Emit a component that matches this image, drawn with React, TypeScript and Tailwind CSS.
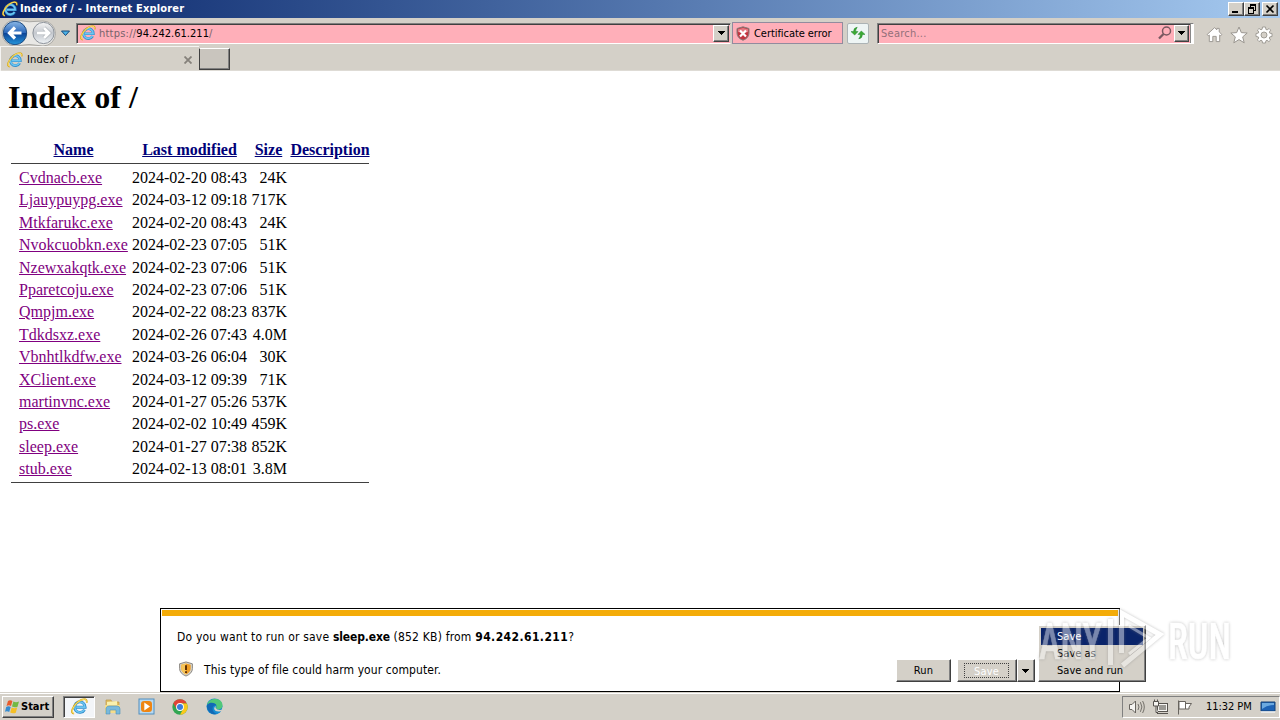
import type { ReactNode } from 'react';

interface FileEntry {
  name: string;
  modified: string;
  size: string;
}

const FILES: FileEntry[] = [
  { name: 'Cvdnacb.exe', modified: '2024-02-20 08:43', size: '24K' },
  { name: 'Ljauypuypg.exe', modified: '2024-03-12 09:18', size: '717K' },
  { name: 'Mtkfarukc.exe', modified: '2024-02-20 08:43', size: '24K' },
  { name: 'Nvokcuobkn.exe', modified: '2024-02-23 07:05', size: '51K' },
  { name: 'Nzewxakqtk.exe', modified: '2024-02-23 07:06', size: '51K' },
  { name: 'Pparetcoju.exe', modified: '2024-02-23 07:06', size: '51K' },
  { name: 'Qmpjm.exe', modified: '2024-02-22 08:23', size: '837K' },
  { name: 'Tdkdsxz.exe', modified: '2024-02-26 07:43', size: '4.0M' },
  { name: 'Vbnhtlkdfw.exe', modified: '2024-03-26 06:04', size: '30K' },
  { name: 'XClient.exe', modified: '2024-03-12 09:39', size: '71K' },
  { name: 'martinvnc.exe', modified: '2024-01-27 05:26', size: '537K' },
  { name: 'ps.exe', modified: '2024-02-02 10:49', size: '459K' },
  { name: 'sleep.exe', modified: '2024-01-27 07:38', size: '852K' },
  { name: 'stub.exe', modified: '2024-02-13 08:01', size: '3.8M' },
];

// Classic raised 3D edge
const RAISED =
  'bg-[#d4d0c8] border border-t-white border-l-white border-r-[#404040] border-b-[#404040] shadow-[inset_-1px_-1px_0_#808080]';

function IeLogo({ className }: { className: string }) {
  return (
    <svg className={className} viewBox="0 0 18 18" fill="none">
      <path d="M14.3 12.4A5.6 5.6 0 1 1 15 9.8H5.5" stroke="#2f8bcb" strokeWidth="3" />
      <path d="M14.1 12.3A5.4 5.4 0 1 1 14.8 9.7H5.6" stroke="#6cc6f2" strokeWidth="1.7" />
      <path d="M3.3 16.6C-1.4 16.6 1.6 8.6 7.2 4.1C12 .3 17.6 -.4 16.6 5" stroke="#d9a920" strokeWidth="1.8" />
      <path d="M3.1 16.2C-.6 15.8 2.3 8.5 7.5 4.2C12 .8 16.8 .2 16.3 4" stroke="#fae36b" strokeWidth="1" />
    </svg>
  );
}

function DownArrow() {
  return (
    <svg className="h-[4px] w-[7px]" viewBox="0 0 7 4" shapeRendering="crispEdges">
      <path d="M0 0H7V1H6V2H5V3H4V4H3V3H2V2H1V1H0Z" fill="#000" />
    </svg>
  );
}

function WindowButton({ children }: { children: ReactNode }) {
  return (
    <div className={`h-[14px] w-4 ${RAISED}`}>
      <svg className="h-3 w-[14px]" viewBox="0 0 14 12" fill="none" stroke="#000" shapeRendering="crispEdges">
        {children}
      </svg>
    </div>
  );
}

function TitleBar() {
  return (
    <div className="flex h-[18px] items-center bg-linear-to-r from-[#0a246a] to-[#a6caf0] pr-[2px] pl-[2px]">
      <IeLogo className="h-4 w-4" />
      <span className="ml-[2px] pt-px text-[11px] font-bold tracking-[0.16px] whitespace-nowrap text-white">
        Index of / - Internet Explorer
      </span>
      <div className="ml-auto flex">
        <WindowButton>
          <path d="M3 9H9" strokeWidth="2" />
        </WindowButton>
        <WindowButton>
          <path d="M5 2H11" strokeWidth="2" />
          <path d="M5.5 2V4M10.5 2V7.5H9M3.5 5V10.5H8.5V5" />
          <path d="M3 5H9" strokeWidth="2" />
        </WindowButton>
        <div className="w-[2px]" />
        <WindowButton>
          <path d="M3.5 2.5L10.5 9.5M10.5 2.5L3.5 9.5" strokeWidth="1.7" shapeRendering="auto" />
        </WindowButton>
      </div>
    </div>
  );
}

function NavButtons() {
  return (
    <svg className="h-7 w-[74px] shrink-0" viewBox="0 0 74 28">
      <defs>
        <linearGradient id="back" x1="0" y1="0" x2="0" y2="1">
          <stop offset="0" stopColor="#8bb7e6" />
          <stop offset="0.48" stopColor="#2c69bb" />
          <stop offset="0.5" stopColor="#0b4296" />
          <stop offset="1" stopColor="#2597dc" />
        </linearGradient>
        <linearGradient id="forward" x1="0" y1="0" x2="0" y2="1">
          <stop offset="0" stopColor="#f5f5f5" />
          <stop offset="0.5" stopColor="#c4c8ce" />
          <stop offset="1" stopColor="#eef2f5" />
        </linearGradient>
      </defs>
      <path d="M15 1Q29 4 43 2A12.5 12.5 0 0 1 43 27Q29 24 15 27A13 13 0 0 1 15 1Z" fill="#e9e8e5" stroke="#aaa9a5" />
      <circle cx="15" cy="14" r="11.7" fill="url(#back)" stroke="#204d82" />
      <circle cx="43.5" cy="14" r="10.6" fill="url(#forward)" stroke="#8d939b" />
      <path d="M21.5 14H10M15 8.5L9.5 14L15 19.5" fill="none" stroke="#fff" strokeWidth="3.2" />
      <path d="M37 14H49M44 9L49 14L44 19" fill="none" stroke="#a9aeb4" strokeWidth="4" />
      <path d="M37 14H49M44 9L49 14L44 19" fill="none" stroke="#fff" strokeWidth="2.8" />
      <path d="M61.5 12H69.5L65.5 16.5Z" fill="#4bb3e8" stroke="#174a7b" />
    </svg>
  );
}

function Toolbar() {
  return (
    <div className="flex h-7 items-center pt-[2px]">
      <NavButtons />
      <div className="ml-[2px] flex h-[21px] w-[655px] items-center border border-t-[#808080] border-r-[#d4d0c8] border-b-white border-l-[#808080] bg-[#ffafb9] pl-[3px] shadow-[inset_1px_1px_0_#404040]">
        <IeLogo className="h-4 w-4 shrink-0" />
        <span className="ml-[3px] pt-[2px] text-[11px] tracking-[0.23px] whitespace-nowrap text-[#77636b]">
          https://<span className="tracking-[0.02px] text-black">94.242.61.211</span>/
        </span>
        <div className={`mr-px ml-auto flex h-[17px] w-4 items-center justify-center ${RAISED}`}>
          <DownArrow />
        </div>
      </div>
      <div className="ml-[1px] flex h-[22px] w-[111px] items-center border border-[#928b9e] bg-[#ffafb9] pl-[3px]">
        <svg className="h-[15px] w-[14px] shrink-0" viewBox="0 0 14 15">
          <path d="M7 .8L13 2.5V7Q13 12 7 14.3Q1 12 1 7V2.5Z" fill="#c23540" stroke="#85807d" />
          <path d="M7 2L12 3.3V6L7 7.2L2 6V3.3Z" fill="#e57982" />
          <path d="M4 4.5L10 10.5M10 4.5L4 10.5" stroke="#fff" strokeWidth="2.2" />
        </svg>
        <span className="ml-1 pt-[2px] text-[11px] tracking-[-0.06px] whitespace-nowrap text-black">Certificate error</span>
      </div>
      <div className="ml-1 flex h-[21px] w-[22px] items-center justify-center rounded-[2px] border border-[#acb3b5] bg-[#eef5f5]">
        <svg className="h-4 w-4" viewBox="0 0 16 16" fill="#3cab32" stroke="#1d812b" strokeWidth="0.5">
          <path d="M7.2 2.2Q3.6 2.6 3.6 6.6H1L4.7 10L8 6.6H5.6Q5.6 4.6 7.2 2.2Z" />
          <path d="M8.8 13.8Q12.4 13.4 12.4 9.4H15L11.3 6L8 9.4H10.4Q10.4 11.4 8.8 13.8Z" />
        </svg>
      </div>
      <div className="ml-[8px] flex h-[21px] w-[317px] items-center border border-t-[#808080] border-r-white border-b-white border-l-[#808080] bg-[#ffafb9] pl-[3px] shadow-[inset_1px_1px_0_#404040]">
        <span className="pt-[2px] text-[11px] tracking-[0.25px] text-[#936f79]">Search...</span>
        <svg className="ml-auto h-4 w-4" viewBox="0 0 16 16" fill="none" stroke="#795860">
          <circle cx="9.5" cy="6" r="4" strokeWidth="1.5" />
          <path d="M6.5 9L2 13.5" strokeWidth="2.3" />
        </svg>
        <div className={`ml-px flex h-[17px] w-[15px] items-center justify-center ${RAISED}`}>
          <DownArrow />
        </div>
        <div className="ml-px h-[19px] w-[3px] border-l border-[#888] bg-white" />
      </div>
      <div className="ml-[12px] flex gap-[7px] pt-[4px]">
        <svg className="h-[17px] w-[17px]" viewBox="0 0 18 18" fill="#fff" stroke="#99958f" strokeWidth="1">
          <path d="M1.2 9L9 1.8L11.5 4V2.5H14V6.3L16.8 9L15.5 10.4L14.5 9.6V16.5H10.8V11H7.2V16.5H3.5V9.6L2.5 10.4Z" />
        </svg>
        <svg className="h-[18px] w-[18px]" viewBox="0 0 18 18" fill="#fff" stroke="#99958f" strokeWidth="1">
          <path d="M9 1L11.3 6.6L17.2 7L12.7 10.9L14.2 16.8L9 13.6L3.8 16.8L5.3 10.9L.8 7L6.7 6.6Z" />
        </svg>
        <svg className="h-[18px] w-[18px]" viewBox="0 0 18 18" fill="#fff" stroke="#99958f" strokeWidth="0.9">
          <path
            fillRule="evenodd"
            d="M7.5 1H10.5L10.9 3.4L12.1 3.9L14.1 2.5L15.7 4.1L14.3 6.1L14.8 7.2L17 7.5V10.5L14.8 10.9L14.2 12L15.6 14L13.9 15.6L12 14.3L10.9 14.8L10.5 17H7.5L7.1 14.8L6 14.2L4 15.6L2.4 13.9L3.8 12L3.3 10.9L1 10.5V7.5L3.3 7.1L3.8 6L2.4 4.1L4 2.5L6 3.8L7.1 3.3ZM9 6A3 3 0 1 0 9 12A3 3 0 1 0 9 6Z"
          />
        </svg>
      </div>
    </div>
  );
}

function TabStrip() {
  return (
    <div className="flex h-[25px] items-start border-b border-[#dedbd5]">
      <div className="flex h-[25px] w-[199px] items-center border-t border-l border-t-[#f5f4f2] border-l-[#f5f4f2] pt-[2px] pl-[6px]">
        <IeLogo className="h-4 w-4" />
        <span className="ml-[4px] text-[11px] tracking-[0.2px] text-black">Index of /</span>
        <svg className="mr-[7px] ml-auto h-[8px] w-[8px]" viewBox="0 0 8 8" stroke="#85817b" strokeWidth="1.8">
          <path d="M.5 .5L7.5 7.5M7.5 .5L.5 7.5" />
        </svg>
      </div>
      <div className="mt-[2px] h-[22px] w-[31px] border border-t-white border-r-[#404040] border-b-[#404040] border-l-[#404040] bg-[#c9c5be] shadow-[inset_-1px_-1px_0_#808080]" />
    </div>
  );
}

function DirectoryListing() {
  return (
    <main className="h-[621px] bg-white pt-[8px] pl-2 font-['Liberation_Serif',serif] text-base text-black">
      <h1 className="h-[37px] text-[32px] leading-[37px] font-bold">Index of /</h1>
      <div className="mt-[24px] ml-[3px] w-[358px]">
        <div className="grid h-[22px] grid-cols-[119px_119px_39px_82px] text-center leading-[20px] font-bold text-[#000078] underline">
          <span className="pl-[6px]">Name</span>
          <span>Last modified</span>
          <span>Size</span>
          <span className="pl-[2px]">Description</span>
        </div>
        <div className="mt-[1px] h-px bg-[#404040]" />
        <div className="pt-[3px]">
          {FILES.map((file) => (
            <div key={file.name} className="grid h-[22.4px] grid-cols-[113px_115px_40px] pl-2 leading-[22.4px]">
              <a className="text-[#800080] underline">{file.name}</a>
              <span className="whitespace-nowrap">{file.modified}</span>
              <span className="text-right">{file.size}</span>
            </div>
          ))}
        </div>
        <div className="mt-[2px] h-px bg-[#404040]" />
      </div>
    </main>
  );
}

function DownloadPrompt() {
  return (
    <div className="absolute top-[608px] left-[160px] h-[84px] w-[960px] border border-black bg-white text-black">
      <div className="mx-px mt-px h-[6px] bg-[#f4ac08]" />
      <div className="flex h-[74px] justify-between pl-4">
        <div className="text-[12px] whitespace-nowrap">
          <p className="mt-[13px] h-4 leading-4 tracking-[0.2px]">
            Do you want to run or save <b className="tracking-[-0.14px]">sleep.exe</b> (852 KB) from{' '}
            <b className="tracking-[0.43px]">94.242.61.211</b>?
          </p>
          <div className="mt-4 flex h-4 items-center">
            <svg className="ml-px h-4 w-4" viewBox="0 0 16 17">
              <path d="M8 1L14.8 3V8Q14.8 13.2 8 16Q1.2 13.2 1.2 8V3Z" fill="#d8d6cf" stroke="#85817b" />
              <path d="M8 2.6L13 4V8Q13 12 8 14.3Q3 12 3 8V4Z" fill="#ee9d25" />
              <path d="M8 2.6V14.3Q3 12 3 8V4Z" fill="#f8c659" />
              <path d="M8 4.5V9.5M8 11V12.8" stroke="#572a00" strokeWidth="2" />
            </svg>
            <span className="ml-[10px] pt-px tracking-[0.09px]">This type of file could harm your computer.</span>
          </div>
        </div>
        <div className="mt-[43px] mr-[84px] flex h-[23px] text-[11px] tracking-[0.2px]">
          <div className={`flex w-[55px] items-center justify-center pt-[2px] ${RAISED}`}>Run</div>
          <div className={`ml-[6px] w-[60px] p-[3px] pl-[6px] ${RAISED}`}>
            <div className="flex h-full w-[45px] items-center justify-center border border-dotted border-[#404040] pt-[3px] text-white">
              Save
            </div>
          </div>
          <div className={`flex w-[18px] items-center justify-center pr-px ${RAISED}`}>
            <DownArrow />
          </div>
        </div>
      </div>
    </div>
  );
}

function SaveMenu() {
  return (
    <div className={`absolute top-[625px] left-[1038px] h-[57px] w-[108px] p-[2px] text-[11px] leading-[17px] tracking-[0.02px] text-black ${RAISED}`}>
      <div className="bg-[#0a246a] pl-4 text-white">Save</div>
      <div className="pl-4">Save as</div>
      <div className="pl-4">Save and run</div>
    </div>
  );
}

function Watermark() {
  return (
    <svg
      className="absolute top-[604px] left-[1034px] h-[72px] w-[204px] opacity-45 drop-shadow-[0_0_1.5px_#777]"
      viewBox="0 0 204 72"
    >
      <g className="font-[Roboto,sans-serif] text-[50px] font-medium" fill="#fff" stroke="#fff" strokeWidth="0.6">
        <text x="5" y="55" textLength="63" lengthAdjust="spacingAndGlyphs">
          ANY
        </text>
        <text x="134" y="55" textLength="63" lengthAdjust="spacingAndGlyphs">
          RUN
        </text>
      </g>
      <g fill="none" stroke="#fff" strokeWidth="5">
        <path d="M76.5 15V61" />
        <path d="M87.5 49V9L126 30.5L88.5 61.5" />
        <path d="M95 50L115 34L95 22" strokeWidth="3" />
      </g>
    </svg>
  );
}

function QuickLaunch() {
  return (
    <div className="ml-[9px] flex items-center">
      <div className="flex h-[22px] w-8 items-center justify-center border border-t-[#808080] border-r-white border-b-white border-l-[#808080] bg-[#f3f5f8] shadow-[inset_1px_1px_0_#404040]">
        <IeLogo className="h-[17px] w-[17px]" />
      </div>
      <svg className="ml-[9px] h-[17px] w-[18px]" viewBox="0 0 18 17">
        <path d="M2 2H7L8 4H15V14H2Z" fill="#e3bf62" stroke="#b99745" strokeWidth="0.7" />
        <path d="M3 4L13 3V8H3Z" fill="#f9f0ad" />
        <path d="M1 7H16V15H1Z" fill="#f5dc8a" />
        <path d="M2 16V10Q3 8 5 8H13Q16 8 16 11V16H12V12H6V16Z" fill="#79b9dc" stroke="#4b92ba" strokeWidth="0.6" />
      </svg>
      <svg className="ml-4 h-[17px] w-[17px]" viewBox="0 0 17 17">
        <rect x="1" y="1" width="15" height="15" fill="#b7d9f2" stroke="#508ebd" />
        <rect x="3" y="3" width="11" height="11" rx="3" fill="#ee8513" />
        <path d="M6.3 4.5V12.5L12 8.5Z" fill="#fff" />
      </svg>
      <svg className="ml-[17px] h-4 w-4" viewBox="0 0 16 16">
        <circle cx="8" cy="8" r="7.7" fill="#31a652" />
        <path d="M1.3 4.2A7.7 7.7 0 0 1 14.8 4.5H8L4.5 9.7Z" fill="#df4437" />
        <path d="M8 4.5H14.8A7.7 7.7 0 0 1 8 15.7L11.3 9.8Z" fill="#fbc91b" />
        <circle cx="8" cy="8" r="3.9" fill="#fff" />
        <circle cx="8" cy="8" r="3" fill="#397ddd" />
      </svg>
      <svg className="ml-[18px] h-[17px] w-[17px]" viewBox="0 0 17 17">
        <circle cx="8.5" cy="8.5" r="8" fill="#158bd1" />
        <path d="M1 6.7C3-.9 16-.8 16.5 7C16.7 12 11 12.2 10 10.6C12 6.5 8.3 3.8 1 6.7Z" fill="#51c779" />
        <path d="M1 7C4 3.2 9.8 5 10.4 7.3C5.4 7 5 13.6 10.7 16A8 8 0 0 1 1 7Z" fill="#1269b5" />
        <path d="M9.8 8.1C8.7 10.2 11 12.9 15.5 11.7L17 9.3V12.5L13.6 13.5C8.5 14.2 6.5 10.3 9.8 8.1Z" fill="#d4d0c8" />
      </svg>
    </div>
  );
}

function SystemTray() {
  return (
    <div className="ml-auto flex h-[22px] w-[158px] items-center border border-t-[#808080] border-r-white border-b-white border-l-[#808080] pl-[5px]">
      <svg className="h-4 w-[18px]" viewBox="0 0 18 16" fill="#f5f4f1" stroke="#68645f">
        <path d="M1.5 5.5H4L7.5 2V14L4 10.5H1.5Z" />
        <path d="M10 5Q12 8 10 11M12.4 3.2Q15.4 8 12.4 12.8M14.6 2Q18 8 14.6 14" fill="none" strokeWidth="0.9" />
      </svg>
      <svg className="ml-[6px] h-4 w-[17px]" viewBox="0 0 17 16" fill="#f5f4f1" stroke="#57534f">
        <rect x="5.5" y="4.5" width="10" height="8" />
        <path d="M7 6H14V11H7Z" fill="#9b9994" stroke="none" />
        <path d="M5 14.5H16M1.5 2.5H6.5V7H1.5ZM2.5 .5V3M5.5 .5V3M4 7V13.5H6" />
      </svg>
      <svg className="ml-[7px] h-4 w-[17px]" viewBox="0 0 17 16" fill="#fff" stroke="#68645f">
        <path d="M2.5 15.5V1.5M3 2.5H9.5V10H3ZM9.5 4.5H15.5L13 8V10H9.5" />
      </svg>
      <span className="ml-[13px] pt-px text-[11px] tracking-[-0.05px] whitespace-nowrap text-black">11:32 PM</span>
      <svg className="ml-[8px] h-[14px] w-4" viewBox="0 0 16 14">
        <path d="M1 2H15V11H1Z" fill="#1d62b5" stroke="#174277" />
        <path d="M2 3H14V5Q7 5 2 9Z" fill="#6ba9e0" />
        <path d="M1 12H15" stroke="#eef0f2" strokeWidth="1.5" />
      </svg>
    </div>
  );
}

function Taskbar() {
  return (
    <div className="flex h-[28px] items-center border-t border-[#d4d0c8] pl-[2px] shadow-[inset_0_1px_0_#fff]">
      <div className={`flex h-[22px] w-[52px] items-center pl-[2px] ${RAISED}`}>
        <svg className="h-[15px] w-[15px] shrink-0" viewBox="0 0 15 15">
          <path d="M3 2Q5 .5 7.4 2L6 7Q4 5.5 1.5 7Z" fill="#e75b2c" />
          <path d="M8.4 2.5Q11 4 14 2.4L12.5 7.7Q10 9 7 7.5Z" fill="#73b944" />
          <path d="M1.2 8Q3.5 6.7 5.7 8L4.2 13Q2 11.6 0 12.8Z" fill="#348bd0" />
          <path d="M6.7 8.5Q9.3 10 12.2 8.6L10.8 13.7Q8 15 5.2 13.5Z" fill="#f5bf26" />
        </svg>
        <span className="ml-px pt-px text-[11px] font-bold text-black">Start</span>
      </div>
      <QuickLaunch />
      <SystemTray />
    </div>
  );
}

export default function App() {
  return (
    <div className="relative flex h-[720px] w-[1280px] flex-col overflow-hidden bg-[#d4d0c8] font-['DejaVu_Sans_Condensed','DejaVu_Sans',sans-serif] [font-stretch:condensed]">
      <TitleBar />
      <Toolbar />
      <TabStrip />
      <DirectoryListing />
      <Taskbar />
      <DownloadPrompt />
      <SaveMenu />
      <Watermark />
    </div>
  );
}
